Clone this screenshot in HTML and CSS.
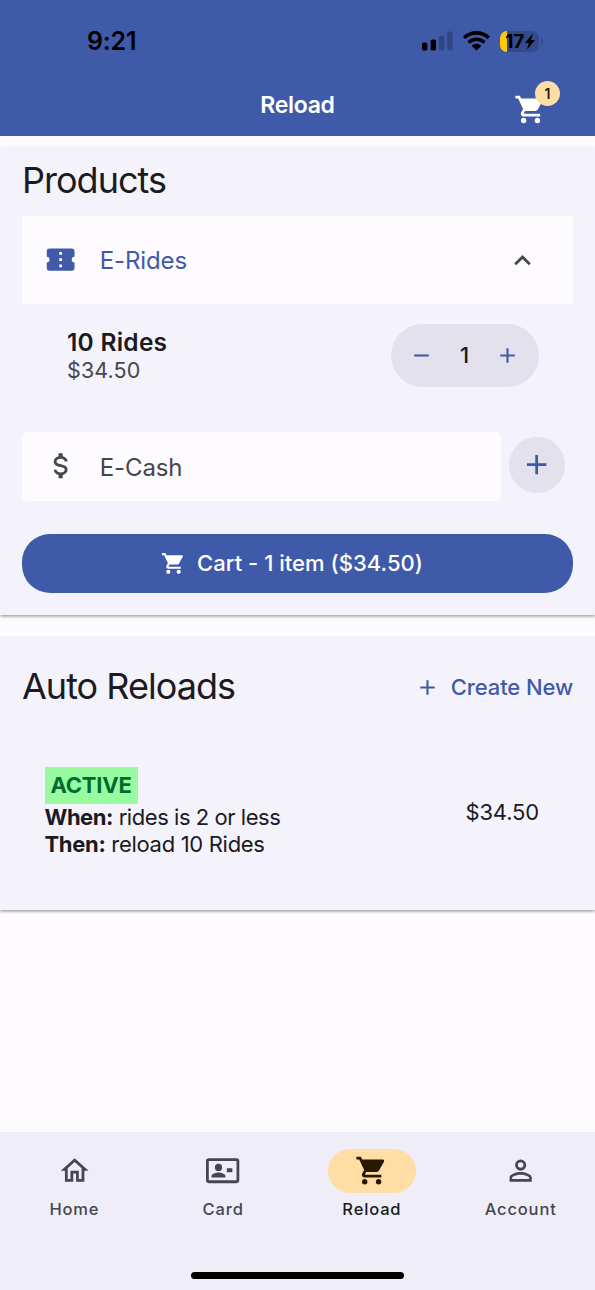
FILE: index.html
```html
<!DOCTYPE html>
<html lang="en">
<head>
<meta charset="utf-8">
<title>Reload</title>
<link rel="stylesheet" href="styles.css">
</head>
<body>
<svg class="defs" width="0" height="0" aria-hidden="true">
  <symbol id="cart" viewBox="0 0 24 24"><path d="M17,18C15.89,18 15,18.89 15,20A2,2 0 0,0 17,22A2,2 0 0,0 19,20C19,18.89 18.1,18 17,18M1,2V4H3L6.6,11.59L5.24,14.04C5.09,14.32 5,14.65 5,15A2,2 0 0,0 7,17H19V15H7.42A0.25,0.25 0 0,1 7.17,14.75C7.17,14.7 7.18,14.66 7.2,14.63L8.1,13H15.55C16.3,13 16.96,12.58 17.3,11.97L20.88,5.5C20.95,5.34 21,5.17 21,5A1,1 0 0,0 20,4H5.21L4.27,2M7,18C5.89,18 5,18.89 5,20A2,2 0 0,0 7,22A2,2 0 0,0 9,20C9,18.89 8.1,18 7,18Z"/></symbol>
  <symbol id="plus" viewBox="0 0 24 24"><path d="M19,13H13V19H11V13H5V11H11V5H13V11H19V13Z"/></symbol>
</svg>
<div class="screen">
  <header class="header">
    <div class="status">
      <span class="time">9:21</span>
      <div class="indicators">
        <svg class="signal" width="32" height="20" viewBox="0 0 32 20"><rect x="0" y="11.5" width="5.4" height="8" rx="1.6"/><rect x="8.6" y="8.5" width="5.4" height="11" rx="1.6"/><g opacity=".22"><rect x="17" y="4.5" width="5.4" height="15" rx="1.6"/><rect x="25.3" y="0.5" width="5.4" height="19" rx="1.6"/></g></svg>
        <svg class="wifi" width="27" height="20" viewBox="0 0 27 20"><path d="M13.5 0C8.3 0 3.7 2 .3 5.2q-.4.4 0 .8l1.8 1.8q.4.4.8 0C5.700 5.300 9.400 3.800 13.500 3.800S21.300 5.300 24.100 7.800q.4.4.8 0l1.800-1.800q.4-.4 0-.8C23.300 2 18.700 0 13.500 0Z"/><path d="M13.500 6.500C10 6.500 7 7.800 4.700 9.900q-.4.400 0 .8l1.800 1.800q.4.400.8 0C8.900 11 11.100 10.100 13.500 10.100S18.100 11 19.700 12.500q.4.400.8 0l1.800-1.800q.4-.4 0-.8C20 7.800 17 6.500 13.500 6.500Z"/><path d="M13.500 12.700C11.700 12.700 10.300 13.300 9.100 14.300q-.5.400 0 .9l3.800 3.700q.6.500 1.200 0l3.800-3.700q.5-.5 0-.9C16.700 13.300 15.300 12.700 13.500 12.700Z"/></svg>
        <div class="battery"><span class="battery-num">17</span><svg class="bolt" width="10" height="15" viewBox="0 0 10 15"><path d="M7.300 .3Q8 -.2 7.800 .7L6 6H9.300Q10 6 9.500 6.700L2.800 14.500Q2 15.200 2.200 14.200L4 9H.7Q0 9 .5 8.200Z"/></svg></div>
      </div>
    </div>
    <div class="appbar">
      <h1 class="title">Reload</h1>
      <div class="cart-wrap"><svg class="icon" width="33" height="33"><use href="#cart"/></svg><span class="badge">1</span></div>
    </div>
  </header>

  <section class="card products">
    <h2 class="heading products-title">Products</h2>
    <div class="row rides">
      <svg class="icon lead" width="33.300" height="33.300" viewBox="0 0 24 24"><path d="M13,8.500H11V6.500H13V8.500M13,13H11V11H13V13M13,17.500H11V15.500H13V17.500M22,10V6C22,4.890 21.100,4 20,4H4A2,2 0 0,0 2,6V10C3.110,10 4,10.900 4,12A2,2 0 0,1 2,14V18A2,2 0 0,0 4,20H20A2,2 0 0,0 22,18V14A2,2 0 0,1 20,12A2,2 0 0,1 22,10Z"/></svg>
      <span class="row-label">E-Rides</span>
      <svg class="icon chevron" width="33" height="33" viewBox="0 0 24 24"><path d="M7.410,15.410L12,10.830L16.590,15.410L18,14L12,8L6,14L7.410,15.410Z"/></svg>
    </div>
    <div class="item">
      <div class="item-text"><div class="item-name">10 Rides</div><div class="item-price">$34.50</div></div>
      <div class="stepper">
        <svg class="icon" width="25" height="25" viewBox="0 0 24 24"><path d="M19,13H5V11H19V13Z"/></svg>
        <span class="qty">1</span>
        <svg class="icon" width="25" height="25"><use href="#plus"/></svg>
      </div>
    </div>
    <div class="cash-line">
      <div class="row cash">
        <svg class="icon lead" width="33.300" height="33.300" viewBox="0 0 24 24"><path d="M7,15H9C9,16.080 10.370,17 12,17C13.630,17 15,16.080 15,15C15,13.900 13.960,13.500 11.760,12.970C9.640,12.440 7,11.780 7,9C7,7.210 8.470,5.690 10.500,5.180V3H13.500V5.180C15.530,5.690 17,7.210 17,9H15C15,7.920 13.630,7 12,7C10.370,7 9,7.920 9,9C9,10.100 10.040,10.500 12.240,11.030C14.360,11.560 17,12.220 17,15C17,16.790 15.530,18.310 13.500,18.820V21H10.500V18.820C8.470,18.310 7,16.790 7,15Z"/></svg>
        <span class="row-label">E-Cash</span>
      </div>
      <div class="round"><svg class="icon" width="33.300" height="33.300"><use href="#plus"/></svg></div>
    </div>
    <div class="cart-button"><svg class="icon" width="25" height="25"><use href="#cart"/></svg><span class="cart-text">Cart - 1 item ($34.50)</span></div>
  </section>

  <section class="card auto">
    <div class="auto-head">
      <h2 class="heading">Auto Reloads</h2>
      <div class="create"><svg class="icon" width="25" height="25"><use href="#plus"/></svg><span class="create-text">Create New</span></div>
    </div>
    <div class="rule">
      <div class="rule-text">
        <span class="active">ACTIVE</span>
        <div class="line when"><b>When:</b> rides is 2 or less</div>
        <div class="line then"><b>Then:</b> reload 10 Rides</div>
      </div>
      <span class="amount">$34.50</span>
    </div>
  </section>

  <nav class="nav">
    <div class="tabs">
      <div class="tab"><span class="pill"><svg class="icon" width="33.300" height="33.300" viewBox="0 0 24 24"><path d="M12 5.690L17 10.190V18H15V12H9V18H7V10.190L12 5.690M12 3L2 12H5V20H11V14H13V20H19V12H22"/></svg></span><span class="tab-label">Home</span></div>
      <div class="tab"><span class="pill"><svg class="icon" width="33.300" height="33.300" viewBox="0 0 24 24"><path fill-rule="evenodd" d="M2 3H22A2 2 0 0 1 24 5V19A2 2 0 0 1 22 21H2A2 2 0 0 1 0 19V5A2 2 0 0 1 2 3ZM2 5V19H22V5Z"/><circle cx="9" cy="9.700" r="2.600"/><path d="M4 17V15.800C4 14.100 7.300 13.250 9 13.250S14 14.100 14 15.800V17ZM15 10.200H19V13.200H15Z"/></svg></span><span class="tab-label">Card</span></div>
      <div class="tab selected"><span class="pill"><svg class="icon" width="33.300" height="33.300"><use href="#cart"/></svg></span><span class="tab-label">Reload</span></div>
      <div class="tab"><span class="pill"><svg class="icon" width="33.300" height="33.300" viewBox="0 0 24 24"><path d="M12,4A4,4 0 0,1 16,8A4,4 0 0,1 12,12A4,4 0 0,1 8,8A4,4 0 0,1 12,4M12,6A2,2 0 0,0 10,8A2,2 0 0,0 12,10A2,2 0 0,0 14,8A2,2 0 0,0 12,6M12,13C14.670,13 20,14.330 20,17V20H4V17C4,14.330 9.330,13 12,13M12,14.900C9.030,14.900 5.900,16.360 5.900,17V18.100H18.100V17C18.100,16.360 14.970,14.900 12,14.900Z"/></svg></span><span class="tab-label">Account</span></div>
    </div>
    <div class="home-bar"></div>
  </nav>
</div>
</body>
</html>
```
FILE: styles.css
```css
* { box-sizing: border-box; }
body { margin: 0; font-family: Inter, "Liberation Sans", sans-serif; color: #1b1b1f; background: #fefbff; }
.defs { display: block; height: 0; }
.icon { display: block; flex: none; fill: currentColor; }
.screen { width: 595px; height: 1290px; display: flex; flex-direction: column; overflow: hidden; }

.header { height: 135.500px; background: #3f5aa9; flex: none; }
.status { height: 75px; padding: 0 56px 0 87px; display: flex; justify-content: space-between; color: #000; }
.time { font-size: 25px; font-weight: 600; line-height: 82px; letter-spacing: -0.200px; }
.indicators { display: flex; padding-top: 30.500px; }
.signal { margin-right: 9px; }
.wifi { margin-right: 10px; }
.battery { position: relative; width: 39px; height: 21px; border-radius: 7px; display: flex; align-items: center; justify-content: center; gap: 0.500px; background: linear-gradient(90deg, #fdcb05 7px, #344a8b 7px); }
.battery::after { content: ""; position: absolute; left: 40.500px; top: 7px; width: 2px; height: 7px; border-radius: 0 3px 3px 0; background: #344a8b; }
.battery-num { font-size: 19px; font-weight: 700; line-height: 21px; letter-spacing: -0.200px; padding-left: 1px; }
.appbar { height: 60px; position: relative; display: flex; justify-content: center; }
.title { margin: 0; font-size: 23px; line-height: 60px; font-weight: 600; color: #fff; letter-spacing: -0.300px; }
.cart-wrap { position: absolute; left: 514px; top: 18px; color: #fff; }
.badge { position: absolute; left: 21px; top: -12px; width: 25px; height: 25px; border-radius: 50%; background: #ffdea6; color: #271900; font-size: 14px; line-height: 25px; text-align: center; font-weight: 600; }

.card { flex: none; background: #f4f2fb; box-shadow: 0 1.500px 3px rgba(0,0,0,.36), 0 0 3px rgba(0,0,0,.06); padding: 0 22px; }
.products { margin-top: 11px; height: 468.500px; }
.heading { margin: 0; font-size: 36px; font-weight: 400; line-height: 69.500px; letter-spacing: -0.980px; white-space: nowrap; }
.products-title { line-height: 67px; height: 69.500px; }
.row { background: #fefbff; display: flex; align-items: center; padding-left: 22px; color: #45464f; }
.rides { height: 88px; width: 551px; color: #3f5aa9; }
.row-label { font-size: 24px; margin-left: 22.500px; letter-spacing: -0.120px; }
.chevron { margin-left: auto; margin-right: 34px; color: #45464f; }
.item { height: 128px; padding: 19.500px 34px 0 45px; display: flex; justify-content: space-between; }
.item-name { font-size: 24.500px; font-weight: 600; line-height: 30px; padding-top: 3px; padding-bottom: 1px; letter-spacing: 0.250px; }
.item-price { font-size: 21.500px; line-height: 25px; color: #45464f; letter-spacing: 0.100px; }
.stepper { width: 148px; height: 63.500px; border-radius: 32px; background: #e2e1ec; display: flex; align-items: center; justify-content: space-between; padding: 0 19px 0 18px; color: #3f5aa9; }
.qty { color: #1b1b1f; font-size: 22px; font-weight: 500; }
.cash-line { display: flex; gap: 8px; height: 68.500px; }
.cash { width: 479px; border-radius: 5.500px; }
.cash .row-label { padding-top: 3px; }
.cash .lead { margin-bottom: 1px; }
.round { width: 55.500px; height: 55.500px; margin-top: 5px; border-radius: 50%; background: #e2e1ec; color: #3f5aa9; display: flex; align-items: center; justify-content: center; }
.cart-button { height: 58.500px; margin-top: 33.500px; width: 551px; border-radius: 28px; background: #3f5aa9; color: #fff; display: flex; align-items: center; justify-content: center; gap: 11px; padding-right: 11px; }
.cart-text { font-size: 22px; font-weight: 500; letter-spacing: 0.030px; }

.auto { margin-top: 22px; height: 273px; }
.auto-head { height: 100px; display: flex; align-items: center; justify-content: space-between; }
.create { display: flex; align-items: center; gap: 11px; color: #3f5aa9; }
.create-text { font-size: 22px; font-weight: 500; letter-spacing: -0.120px; }
.rule { display: flex; justify-content: space-between; padding: 30px 34px 0 22.500px; }
.active { display: block; width: 93px; height: 37px; line-height: 37px; text-align: center; background: #98fba0; color: #006d2f; font-weight: 700; font-size: 22px; letter-spacing: -0.200px; }
.line { line-height: 27px; font-size: 22px; white-space: nowrap; }
.when { letter-spacing: -0.450px; }
.then { letter-spacing: -0.310px; }
.amount { font-size: 22px; line-height: 27px; padding-top: 32px; letter-spacing: -0.150px; }

.nav { margin-top: auto; height: 158px; background: #efedf7; flex: none; }
.tabs { display: flex; height: 139.500px; padding-top: 17px; }
.tab { flex: 1; display: flex; flex-direction: column; align-items: center; color: #45464f; }
.pill { width: 88px; height: 44px; border-radius: 22px; display: flex; align-items: center; justify-content: center; }
.tab-label { font-size: 16.500px; font-weight: 500; line-height: 22px; margin-top: 5px; letter-spacing: 0.850px; }
.selected { color: #1b1b1f; }
.selected .pill { background: #ffdea6; color: #271900; }
.home-bar { width: 213px; height: 7px; border-radius: 4px; background: #000; margin: 0 auto; }
```
